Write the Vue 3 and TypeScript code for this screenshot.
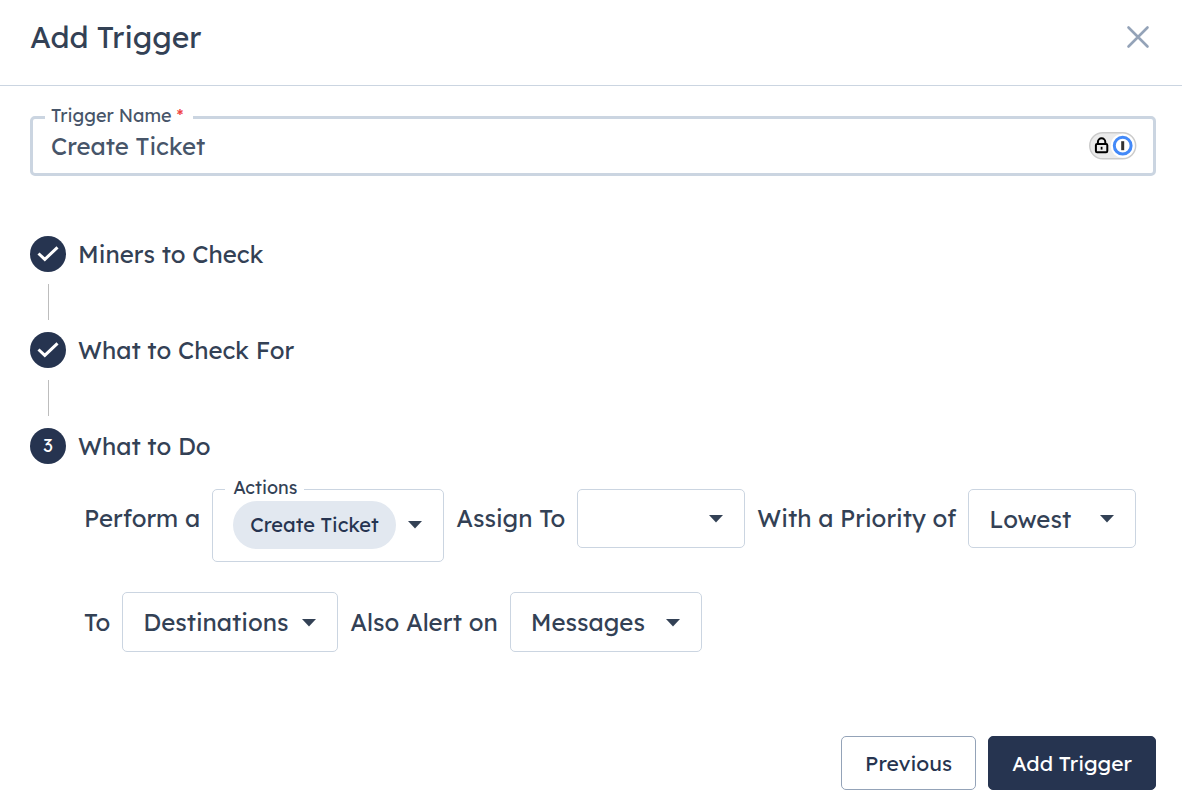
<script setup lang="ts">
import { ref } from 'vue'

interface Step {
  label: string
  done: boolean
}

const triggerName = ref('Create Ticket')
const action = ref('Create Ticket')
const assignee = ref('')
const priority = ref('Lowest')
const destination = ref('Destinations')
const alertChannel = ref('Messages')

const steps: Step[] = [
  { label: 'Miners to Check', done: true },
  { label: 'What to Check For', done: true },
  { label: 'What to Do', done: false },
]
</script>

<template>
  <main class="dialog">
    <header class="header">
      <h1 class="title">Add Trigger</h1>
      <button class="close" type="button" aria-label="Close">
        <svg width="24" height="24" viewBox="0 0 24 24" aria-hidden="true">
          <path d="M2.5 2.5 21.5 21.5M21.5 2.5 2.5 21.5" fill="none" stroke="#94a3b8" stroke-width="2.6" stroke-linecap="round" />
        </svg>
      </button>
    </header>

    <form class="body" @submit.prevent>
      <div class="name-field">
        <label class="float-label" for="trigger-name">Trigger Name <span class="required">*</span></label>
        <input id="trigger-name" v-model="triggerName" class="name-input" type="text" required />
        <svg class="vault" width="48" height="28" viewBox="0 0 48 28" aria-hidden="true">
          <rect x="0.7" y="0.7" width="46" height="26" rx="13" fill="#ebebeb" stroke="#cbcbcb" stroke-width="1.4" />
          <circle cx="33.7" cy="13.7" r="12" fill="#fff" />
          <circle cx="33.7" cy="13.7" r="8.4" fill="#fff" stroke="#4389f8" stroke-width="3" />
          <rect x="32.2" y="9.2" width="3" height="9" fill="#333" />
          <rect x="6.9" y="12" width="11.4" height="8.200" rx="1.2" fill="none" stroke="#000" stroke-width="2" />
          <path d="M8.900 12V10a3.700 3.700 0 0 1 7.400 0V12" fill="none" stroke="#000" stroke-width="2" />
          <path d="M12.600 14.800V17.600" stroke="#000" stroke-width="1.800" />
        </svg>
      </div>

      <ol class="steps">
        <li v-for="(step, index) in steps" :key="step.label" class="step">
          <span class="badge">
            <svg v-if="step.done" width="22" height="18" viewBox="0 0 22 18" aria-hidden="true">
              <path d="M1.500 8.500 7.800 14.400 20.500 2.300" fill="none" stroke="#fff" stroke-width="3" />
            </svg>
            <template v-else>{{ index + 1 }}</template>
          </span>
          <span class="step-label">{{ step.label }}</span>
        </li>
      </ol>

      <div class="sentence">
        <div class="row compact">
          <span class="phrase">Perform a</span>
          <div class="chip-box">
            <label class="float-label small" for="action">Actions</label>
            <select id="action" v-model="action" class="chip">
              <option>Create Ticket</option>
            </select>
            <svg class="caret" width="14" height="8" viewBox="0 0 14 8" aria-hidden="true"><path d="M0 0h14L7 7.500z" fill="#334155" /></svg>
          </div>
          <label class="phrase" for="assignee">Assign To</label>
          <div class="select-box">
            <select id="assignee" v-model="assignee" class="select">
              <option value=""></option>
            </select>
            <svg class="caret over" width="14" height="8" viewBox="0 0 14 8" aria-hidden="true"><path d="M0 0h14L7 7.500z" fill="#334155" /></svg>
          </div>
          <label class="phrase" for="priority">With a Priority of</label>
          <div class="select-box">
            <select id="priority" v-model="priority" class="select">
              <option>Lowest</option>
            </select>
            <svg class="caret over" width="14" height="8" viewBox="0 0 14 8" aria-hidden="true"><path d="M0 0h14L7 7.500z" fill="#334155" /></svg>
          </div>
        </div>
        <div class="row">
          <label class="phrase" for="destination">To</label>
          <div class="select-box wide">
            <select id="destination" v-model="destination" class="select">
              <option>Destinations</option>
            </select>
            <svg class="caret over" width="14" height="8" viewBox="0 0 14 8" aria-hidden="true"><path d="M0 0h14L7 7.500z" fill="#334155" /></svg>
          </div>
          <label class="phrase" for="alert">Also Alert on</label>
          <div class="select-box medium">
            <select id="alert" v-model="alertChannel" class="select">
              <option>Messages</option>
            </select>
            <svg class="caret over" width="14" height="8" viewBox="0 0 14 8" aria-hidden="true"><path d="M0 0h14L7 7.500z" fill="#334155" /></svg>
          </div>
        </div>
      </div>

      <footer class="footer">
        <button class="btn secondary" type="button">Previous</button>
        <button class="btn primary" type="submit">Add Trigger</button>
      </footer>
    </form>
  </main>
</template>

<style>
body {
  background: #fff;
}
</style>

<style scoped>
.dialog,
.dialog * {
  box-sizing: border-box;
}
.dialog {
  color: #334155;
  font-family: Lexend, Inter, sans-serif;
  font-size: 24px;
  line-height: 30px;
}
.header {
  display: flex;
  align-items: center;
  justify-content: space-between;
  padding: 16px 32px 27px 30px;
  border-bottom: 1px solid #cbd5e1;
}
.title {
  margin: 0;
  font-size: 30px;
  font-weight: 400;
  line-height: 42px;
}
.close {
  display: flex;
  padding: 0;
  border: 0;
  background: none;
  cursor: pointer;
}
.body {
  padding: 30px 26px 20px 30px;
}
.name-field {
  position: relative;
  display: flex;
  align-items: center;
  height: 60px;
  padding: 0 16px 0 18px;
  border: 3px solid #cbd5e1;
  border-radius: 5px;
}
.float-label {
  position: absolute;
  top: -15px;
  left: 12px;
  padding: 0 9px 0 6px;
  background: #fff;
  color: #475569;
  font-size: 18px;
  line-height: 24px;
}
.float-label.small {
  top: -14px;
  padding: 0 7px 0 8px;
  color: #334155;
}
.required {
  color: #ef4444;
}
.name-input {
  flex: 1;
  min-width: 0;
  padding: 0;
  border: 0;
  outline: 0;
  background: none;
  color: #475569;
  font: inherit;
}
.steps {
  display: flex;
  flex-direction: column;
  gap: 60px;
  margin: 60px 0 0;
  padding: 0;
  list-style: none;
}
.step {
  position: relative;
  display: flex;
  align-items: center;
  gap: 12px;
}
.step:not(:last-child)::after {
  content: '';
  position: absolute;
  top: 48px;
  left: 18px;
  width: 1px;
  height: 36px;
  background: #bdbdbd;
}
.badge {
  display: flex;
  align-items: center;
  justify-content: center;
  width: 36px;
  height: 36px;
  border-radius: 50%;
  background: #263450;
  color: #fff;
  font-size: 18px;
}
.sentence {
  display: flex;
  flex-direction: column;
  gap: 30px;
  padding: 25px 0 0 54px;
}
.row {
  display: flex;
  align-items: flex-start;
  gap: 12px;
}
.phrase {
  line-height: 60px;
  white-space: nowrap;
}
.chip-box {
  position: relative;
  display: flex;
  align-items: center;
  gap: 12px;
  padding: 11px 21px 12px 20px;
  border: 1px solid #cbd5e1;
  border-radius: 5px;
}
.chip {
  appearance: none;
  height: 48px;
  padding: 0 17px;
  border: 0;
  border-radius: 24px;
  background: #e2e8f0;
  color: #263450;
  font: inherit;
  font-size: 20px;
}
.select-box {
  position: relative;
  width: 168px;
}
.select-box.wide {
  width: 216px;
}
.select-box.medium {
  width: 192px;
}
.select {
  appearance: none;
  display: block;
  width: 100%;
  height: 60px;
  padding: 0 40px 0 20px;
  border: 1px solid #cbd5e1;
  border-radius: 5px;
  background: #fff;
  color: #334155;
  font: inherit;
}
.caret {
  flex: none;
}
.caret.over {
  position: absolute;
  top: 27px;
  right: 22px;
  pointer-events: none;
}
.compact .phrase {
  line-height: 58px;
}
.compact .select {
  height: 59px;
}
.compact .caret.over {
  top: 26px;
}
.footer {
  display: flex;
  justify-content: flex-end;
  gap: 12px;
  margin-top: 84px;
}
.btn {
  height: 54px;
  padding: 0 23px;
  border: 1px solid #263450;
  border-radius: 5px;
  font: inherit;
  font-size: 21px;
  cursor: pointer;
}
.secondary {
  border-color: #94a3b8;
  background: #fff;
  color: #263450;
}
.primary {
  background: #263450;
  color: #fff;
}
</style>
